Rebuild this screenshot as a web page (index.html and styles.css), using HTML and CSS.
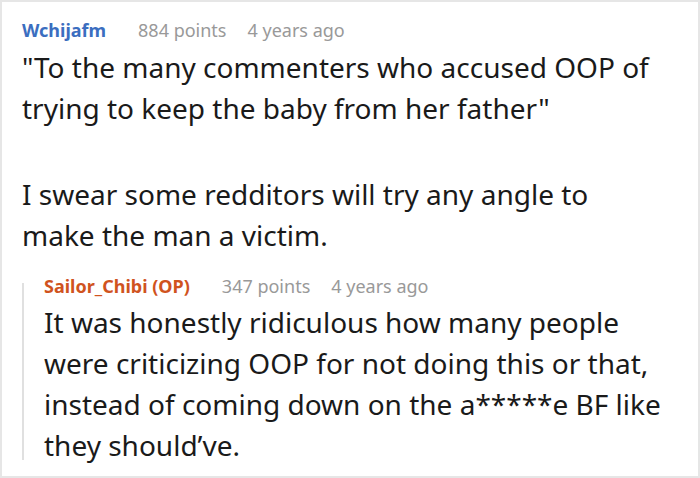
FILE: index.html
```html
<!DOCTYPE html>
<html lang="en">
<head>
    <meta charset="UTF-8">
    <meta name="viewport" content="width=device-width, initial-scale=1.0">
    <title>Comments</title>
    <link rel="stylesheet" href="styles.css">
</head>
<body>
    <div class="thread">
        <div class="comment">
            <div class="meta">
                <span class="author">Wchijafm</span>
                <span class="info">884 points</span>
                <span class="info">4 years ago</span>
            </div>
            <p class="text">"To the many commenters who accused OOP of trying to keep the baby from her father"</p>
            <p class="text">I swear some redditors will try any angle to make the man a victim.</p>
        </div>
        <div class="reply">
            <div class="meta">
                <span class="author op">Sailor_Chibi (OP)</span>
                <span class="info">347 points</span>
                <span class="info">4 years ago</span>
            </div>
            <p class="text">It was honestly ridiculous how many people were criticizing OOP for not doing this or that, instead of coming down on the a*****e BF like they should’ve.</p>
        </div>
    </div>
</body>
</html>
```

FILE: styles.css
```css
body {
    margin: 0;
    font-family: "Noto Sans", "Open Sans", sans-serif;
    background-color: #fff;
    color: #1a1a1a;
}
.thread {
    width: 700px;
    height: 478px;
    box-sizing: border-box;
    border: 2px solid #e6e6e6;
    padding: 14px 20px 0 20px;
    overflow: hidden;
}
.meta {
    display: flex;
    gap: 21px;
    font-size: 18px;
    line-height: 28px;
}
.author {
    font-weight: bold;
    color: #3b6ec0;
    margin-right: 11px;
}
.author.op {
    color: #d0531e;
}
.info {
    color: #999;
}
.text {
    margin: 0;
    font-size: 28px;
    line-height: 41px;
}
.comment {
    padding-right: 22px;
}
.comment .text:first-of-type {
    margin-top: 3px;
}
.comment .text + .text {
    margin-top: 45px;
}
/* reply is indented with a thin rule that starts under the author line */
.reply {
    display: flex;
    flex-direction: column;
    margin-top: 27px;
    border-left: 2px solid #e0e0e0;
    padding-left: 20px;
}
.reply .meta {
    margin-top: -11px;
}
.reply .text {
    margin-top: 2px;
    margin-bottom: -6px;
}
```
